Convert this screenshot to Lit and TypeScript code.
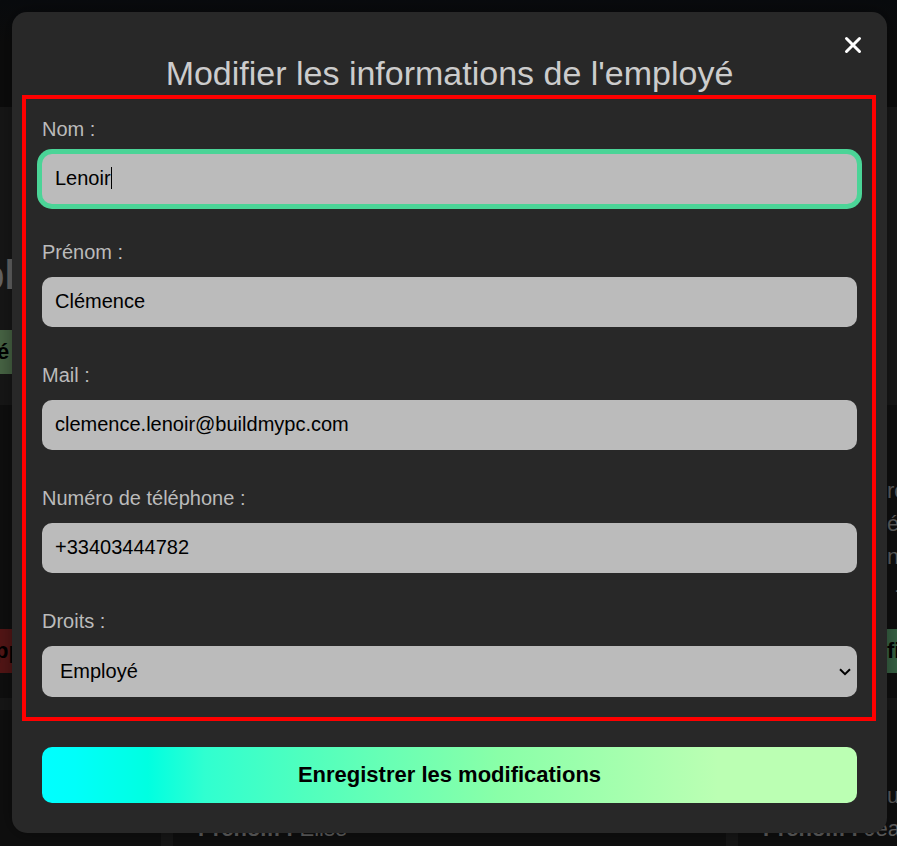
import { LitElement, html, css } from "lit";
import { customElement } from "lit/decorators.js";

interface Field {
  id: string;
  label: string;
  type: string;
  value: string;
}

const fields: Field[] = [
  { id: "prenom", label: "Prénom :", type: "text", value: "Clémence" },
  { id: "mail", label: "Mail :", type: "email", value: "clemence.lenoir@buildmypc.com" },
  { id: "telephone", label: "Numéro de téléphone :", type: "tel", value: "+33403444782" },
];

// Dimmed employee list that sits behind the dialog.
@customElement("employee-page")
export class EmployeePage extends LitElement {
  static styles = css`
    :host {
      display: block;
      position: absolute;
      inset: 0;
      overflow: hidden;
      background: #171717;
      color: #606060;
      font-size: 22px;
      line-height: 33px;
    }
    .header {
      height: 107px;
      background: linear-gradient(#090b0e, #0c0c0c 40%);
    }
    .intro {
      display: flex;
      flex-direction: column;
      align-items: flex-start;
      box-sizing: border-box;
      height: 298px;
      padding-top: 142px;
    }
    .heading {
      margin: 0 0 29px -20px;
      font-size: 40px;
      line-height: 52px;
      color: #666;
    }
    .action {
      display: block;
      height: 44px;
      padding: 0 16px;
      border: 0;
      border-radius: 4px;
      font: bold 22px "Liberation Sans", Arial, sans-serif;
      color: #000;
      background: #486545;
    }
    .intro .action {
      padding-left: 0;
      margin-left: -3px;
    }
    .cards {
      display: grid;
      grid-template-columns: repeat(3, 553px);
      grid-auto-rows: 293px;
      gap: 12px;
      margin-left: -392px;
    }
    .card {
      box-sizing: border-box;
      display: flex;
      flex-direction: column;
      padding: 69px 25px 25px;
      background: #0f0f0f;
    }
    .card p {
      margin: 0;
      white-space: nowrap;
    }
    .values {
      padding-left: 124px;
    }
    .dash {
      padding-left: 8px;
    }
    .footer {
      display: flex;
      margin-top: auto;
    }
    .danger {
      margin-left: 346px;
      background: #541616;
    }
    .edit {
      margin-left: 108px;
      background: #386345;
    }
  `;

  render() {
    return html`
      <div class="header"></div>
      <div class="intro">
        <h1 class="heading">pl</h1>
        <button class="action" type="button">é</button>
      </div>
      <div class="cards">
        <div class="card">
          <div class="footer"><button class="action danger" type="button">pp</button></div>
        </div>
        <div class="card"></div>
        <div class="card">
          <div class="values">
            <p>re</p>
            <p>é</p>
            <p>né</p>
            <p class="dash">-</p>
          </div>
          <div class="footer"><button class="action edit" type="button">fi</button></div>
        </div>
        <div class="card"></div>
        <div class="card">
          <p>&nbsp;</p>
          <p><b>Prénom :</b> Elise</p>
        </div>
        <div class="card">
          <p class="values">u</p>
          <p><b>Prénom :</b> Jea</p>
        </div>
      </div>
    `;
  }
}

@customElement("app-root")
export class AppRoot extends LitElement {
  static styles = css`
    :host {
      display: block;
      position: relative;
      box-sizing: border-box;
      min-height: 100vh;
      padding: 12px 10px 12px 12px;
      overflow: hidden;
      font-family: "Liberation Sans", Arial, sans-serif;
    }
    .dialog {
      position: relative;
      padding: 40px 30px 30px;
      border-radius: 15px;
      background: #282828;
      box-shadow: 0 0 20px rgba(0, 0, 0, 0.4);
    }
    .title {
      margin: 0;
      font-size: 34px;
      font-weight: normal;
      line-height: 43px;
      text-align: center;
      color: #ccc;
    }
    .close {
      position: absolute;
      top: 21px;
      right: 22px;
      width: 24px;
      height: 24px;
      padding: 0;
      border: 0;
      background: none;
      cursor: pointer;
    }
    .close svg {
      display: block;
    }
    .frame {
      display: flex;
      flex-direction: column;
      gap: 36px;
      margin: 0 -19px 26px -20px;
      padding: 18px 15px 20px 16px;
      border: 4px solid #f00;
    }
    .field {
      display: flex;
      flex-direction: column;
      gap: 13px;
    }
    .label {
      font-size: 20px;
      line-height: 24px;
      color: #bbb;
    }
    .box {
      position: relative;
      display: flex;
    }
    .control {
      box-sizing: border-box;
      width: 100%;
      height: 50px;
      margin: 0;
      padding: 0 13px 2px;
      border: 0;
      border-radius: 10px;
      outline: 0;
      font: 20px "Liberation Sans", Arial, sans-serif;
      color: #000;
      background-color: #bbb;
    }
    .active {
      box-shadow: 0 0 0 5px #4bd497;
      caret-color: transparent;
    }
    .caret {
      position: absolute;
      top: 13px;
      left: 69px;
      width: 1px;
      height: 22px;
      background: #000;
    }
    .select {
      height: 51px;
      padding: 0 32px 2px 18px;
      appearance: none;
    }
    .arrow {
      position: absolute;
      top: 22px;
      right: 6px;
      pointer-events: none;
    }
    .save {
      display: block;
      width: 100%;
      height: 56px;
      padding: 0;
      border: 0;
      border-radius: 10px;
      font: bold 22px "Liberation Sans", Arial, sans-serif;
      color: #000;
      background: linear-gradient(
        90deg,
        #00ffff 0%,
        #00fffa 4%,
        #00ffe1 13%,
        #30ffd0 20%,
        #4fffbe 32%,
        #89ffa8 56%,
        #bbffb3 83%,
        #bbffb3 100%
      );
      cursor: pointer;
    }
  `;

  render() {
    return html`
      <employee-page></employee-page>
      <form class="dialog">
        <button class="close" type="button" aria-label="Fermer">
          <svg width="24" height="24" viewBox="0 0 24 24" fill="none" stroke="#fff" stroke-width="3" stroke-linecap="round">
            <path d="M5.5 5.5 18.5 18.5M18.5 5.5 5.5 18.5" />
          </svg>
        </button>
        <h2 class="title">Modifier les informations de l'employé</h2>
        <div class="frame">
          <div class="field">
            <label class="label" for="nom">Nom :</label>
            <div class="box">
              <input class="control active" id="nom" type="text" .value=${"Lenoir"} />
              <span class="caret"></span>
            </div>
          </div>
          ${fields.map(
            (f) => html`
              <div class="field">
                <label class="label" for=${f.id}>${f.label}</label>
                <input class="control" id=${f.id} type=${f.type} .value=${f.value} />
              </div>
            `
          )}
          <div class="field">
            <label class="label" for="droits">Droits :</label>
            <div class="box">
              <select class="control select" id="droits">
                <option>Employé</option>
              </select>
              <svg class="arrow" width="12" height="8" viewBox="0 0 12 8" fill="none" stroke="#000" stroke-width="2">
                <path d="M1 1.2 6 6.2 11 1.2" />
              </svg>
            </div>
          </div>
        </div>
        <button class="save" type="submit">Enregistrer les modifications</button>
      </form>
    `;
  }
}
